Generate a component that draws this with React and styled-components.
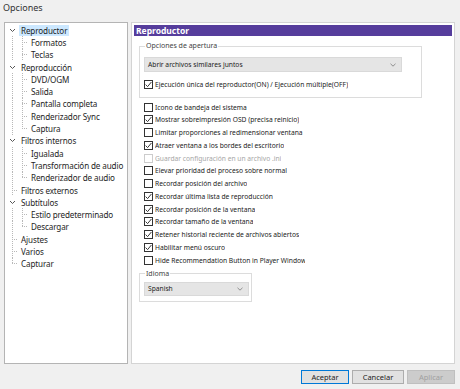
import styled, { createGlobalStyle } from 'styled-components';

const GlobalStyle = createGlobalStyle`
  body {
    margin: 0;
    background: #f0f0f0;
    font-family: "Noto Sans", "DejaVu Sans", sans-serif;
    color: #1e1e1e;
  }
`;

const Window = styled.div`
  width: 460px;
  height: 389px;
  display: flex;
  flex-direction: column;
  box-sizing: border-box;
  overflow: hidden;
`;

const Title = styled.div`
  height: 22px;
  padding: 1px 0 0 3px;
  box-sizing: border-box;
  font-size: 9px;
  line-height: 14px;
  color: #333;
`;

const Main = styled.div`
  display: flex;
  gap: 3px;
  height: 342px;
  padding: 0 5px 0 4px;
`;

const Tree = styled.div`
  width: 124px;
  flex-shrink: 0;
  box-sizing: border-box;
  background: #fff;
  border: 1px solid #b4b4b4;
  padding-top: 1px;
  display: flex;
  flex-direction: column;
`;

const dots = 'repeating-linear-gradient(to bottom, #b8b8b8 0 1px, transparent 1px 2px)';
const hdots = 'repeating-linear-gradient(to right, #b8b8b8 0 1px, transparent 1px 2px)';

const TreeRow = styled.div`
  display: flex;
  align-items: center;
  height: 12.3px;
  padding-left: 2px;
  font-size: 8.1px;
  letter-spacing: -0.12px;
  white-space: nowrap;
`;

const Guide = styled.div`
  width: 10px;
  height: 100%;
  flex-shrink: 0;
  display: flex;
  align-items: center;
  justify-content: center;
  background:
    ${(p) => (p.$v ? `${dots} 5px 0 / 1px ${p.$v === 'top' ? '50%' : '100%'} no-repeat` : 'none')}
    ${(p) => (p.$h ? `, ${hdots} 5px 50% / 5px 1px no-repeat` : '')};
`;

const TreeLabel = styled.span`
  margin-left: 2px;
  padding: 0 2px;
  line-height: 11px;
  background: ${(p) => (p.$selected ? '#cce8ff' : 'transparent')};
`;

const Chevron = () => (
  <svg width="7" height="5" viewBox="0 0 7 5">
    <polyline points="1,1 3.5,3.5 6,1" fill="none" stroke="#444" strokeWidth="0.9" />
  </svg>
);

const Panel = styled.div`
  flex: 1;
  box-sizing: border-box;
  background: #fff;
  border: 1px solid #d4d4d4;
  padding: 2px;
  font-size: 6.7px;
`;

const Header = styled.div`
  height: 11px;
  background: #563d9c;
  color: #fff;
  font-weight: bold;
  font-size: 8.5px;
  line-height: 11px;
  padding-left: 2px;
`;

const Content = styled.div`
  padding-left: 5px;
  display: flex;
  flex-direction: column;
  align-items: flex-start;
`;

const Group = styled.fieldset`
  margin: ${(p) => p.$top}px 0 0 0;
  padding: 0 4px ${(p) => p.$bottom}px 4px;
  width: ${(p) => p.$width}px;
  box-sizing: border-box;
  border: 1px solid #dcdcdc;
  min-width: 0;
`;

const Legend = styled.legend`
  padding: 0 1px;
  margin-left: 1px;
  font-size: 7px;
  line-height: 10px;
  color: #444;
`;

const Select = styled.div`
  display: flex;
  align-items: center;
  justify-content: space-between;
  box-sizing: border-box;
  width: ${(p) => p.$width}px;
  height: ${(p) => p.$height}px;
  margin-top: ${(p) => p.$top}px;
  padding: 0 5px 0 3px;
  background: #e5e5e5;
  border: 1px solid #d9d9d9;
  color: #222;
`;

const SelectArrow = () => (
  <svg width="6" height="4" viewBox="0 0 6 4">
    <polyline points="0.5,0.8 3,3.2 5.5,0.8" fill="none" stroke="#777" strokeWidth="0.8" />
  </svg>
);

const OptionList = styled.div`
  margin: 3px 0 0 5px;
  display: flex;
  flex-direction: column;
`;

const CheckRow = styled.div`
  display: flex;
  align-items: center;
  height: 12.75px;
  margin-top: ${(p) => p.$top || 0}px;
  gap: 2px;
  color: ${(p) => (p.$disabled ? '#a6a6a6' : '#222')};
  white-space: nowrap;
`;

const Box = styled.span`
  width: 9px;
  height: 9px;
  box-sizing: border-box;
  flex-shrink: 0;
  border: 1px solid ${(p) => (p.$disabled ? '#cccccc' : '#333')};
  background: #fff;
  display: flex;
  align-items: center;
  justify-content: center;
`;

const CheckText = styled.span`
  max-width: ${(p) => (p.$wide ? 'none' : '150px')};
  overflow: hidden;
`;

const Check = ({ checked, disabled, children, top, wide }) => (
  <CheckRow $disabled={disabled} $top={top}>
    <Box $disabled={disabled}>
      {checked && (
        <svg width="7" height="7" viewBox="0 0 7 7">
          <polyline points="0.6,3.6 2.6,5.6 6.4,1" fill="none" stroke="#222" strokeWidth="0.9" />
        </svg>
      )}
    </Box>
    <CheckText $wide={wide}>{children}</CheckText>
  </CheckRow>
);

const Footer = styled.div`
  display: flex;
  justify-content: flex-end;
  gap: 3px;
  padding: 6px 5px 0 0;
`;

const Button = styled.div`
  width: ${(p) => p.$w}px;
  height: 14px;
  box-sizing: border-box;
  display: flex;
  align-items: center;
  justify-content: center;
  font-size: 7.5px;
  background: ${(p) => (p.$disabled ? '#cccccc' : '#e1e1e1')};
  color: ${(p) => (p.$disabled ? '#a0a0a0' : '#222')};
  border: 1px solid ${(p) => (p.$primary ? '#0078d7' : p.$disabled ? '#bfbfbf' : '#adadad')};
`;

const tree = [
  { label: 'Reproductor', level: 0, open: true, selected: true },
  { label: 'Formatos', level: 1 },
  { label: 'Teclas', level: 1 },
  { label: 'Reproducción', level: 0, open: true },
  { label: 'DVD/OGM', level: 1 },
  { label: 'Salida', level: 1 },
  { label: 'Pantalla completa', level: 1 },
  { label: 'Renderizador Sync', level: 1 },
  { label: 'Captura', level: 1, last: true },
  { label: 'Filtros internos', level: 0, open: true },
  { label: 'Igualada', level: 1 },
  { label: 'Transformación de audio', level: 1 },
  { label: 'Renderizador de audio', level: 1, last: true },
  { label: 'Filtros externos', level: 0 },
  { label: 'Subtítulos', level: 0, open: true },
  { label: 'Estilo predeterminado', level: 1 },
  { label: 'Descargar', level: 1, last: true },
  { label: 'Ajustes', level: 0 },
  { label: 'Varios', level: 0 },
  { label: 'Capturar', level: 0, rootLast: true },
];

const options = [
  ['Icono de bandeja del sistema', false],
  ['Mostrar sobreimpresión OSD (precisa reinicio)', true],
  ['Limitar proporciones al redimensionar ventana', false],
  ['Atraer ventana a los bordes del escritorio', true],
  ['Guardar configuración en un archivo .ini', false, true],
  ['Elevar prioridad del proceso sobre normal', false],
  ['Recordar posición del archivo', false],
  ['Recordar última lista de reproducción', true],
  ['Recordar posición de la ventana', true],
  ['Recordar tamaño de la ventana', true],
  ['Retener historial reciente de archivos abiertos', true],
  ['Habilitar menú oscuro', true],
  ['Hide Recommendation Button in Player Window', false],
];

export default function App() {
  return (
    <>
      <GlobalStyle />
      <Window>
        <Title>Opciones</Title>
        <Main>
          <Tree>
            {tree.map((item) => (
              <TreeRow key={item.label}>
                {item.level === 0 ? (
                  item.open ? (
                    <Guide>
                      <Chevron />
                    </Guide>
                  ) : (
                    <Guide $v={item.rootLast ? 'top' : 'full'} $h />
                  )
                ) : (
                  <>
                    <Guide $v="full" />
                    <Guide $v={item.last ? 'top' : 'full'} $h />
                  </>
                )}
                <TreeLabel $selected={item.selected}>{item.label}</TreeLabel>
              </TreeRow>
            ))}
          </Tree>
          <Panel>
            <Header>Reproductor</Header>
            <Content>
              <Group $top={5} $bottom={6} $width={283}>
                <Legend>Opciones de apertura</Legend>
                <Select $width={258} $height={15} $top={6}>
                  <span>Abrir archivos similares juntos</span>
                  <SelectArrow />
                </Select>
                <Check checked wide top={6}>
                  Ejecución única del reproductor(ON) / Ejecución múltiple(OFF)
                </Check>
              </Group>
              <OptionList>
                {options.map(([label, checked, disabled]) => (
                  <Check key={label} checked={checked} disabled={disabled}>
                    {label}
                  </Check>
                ))}
              </OptionList>
              <Group $top={2} $bottom={5} $width={113}>
                <Legend>Idioma</Legend>
                <Select $width={105} $height={14} $top={3}>
                  <span>Spanish</span>
                  <SelectArrow />
                </Select>
              </Group>
            </Content>
          </Panel>
        </Main>
        <Footer>
          <Button $w={48} $primary>Aceptar</Button>
          <Button $w={52}>Cancelar</Button>
          <Button $w={48} $disabled>Aplicar</Button>
        </Footer>
      </Window>
    </>
  );
}
